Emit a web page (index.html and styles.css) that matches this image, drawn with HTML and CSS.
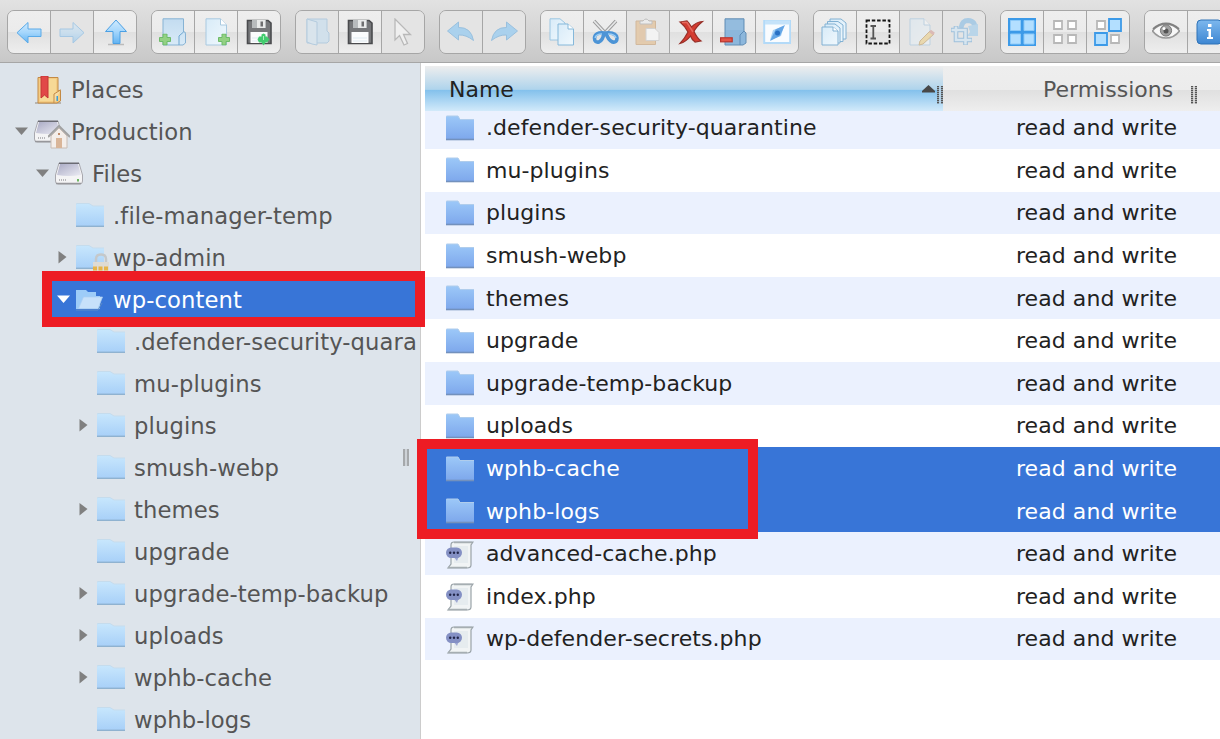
FILE: index.html
```html
<!DOCTYPE html>
<html lang="en">
<head>
<meta charset="UTF-8">
<title>File Manager</title>
<link rel="stylesheet" href="styles.css">
</head>
<body>

<!-- shared icons -->
<svg class="defs" width="0" height="0">
	<defs>
		<linearGradient id="gBlue" x1="0" y1="0" x2="0" y2="1"><stop offset="0" stop-color="#d0eafd"/><stop offset=".5" stop-color="#a4d6fc"/><stop offset="1" stop-color="#62b3f2"/></linearGradient>
		<linearGradient id="gTree" x1="0" y1="0" x2="0" y2="1"><stop offset="0" stop-color="#c8e7fd"/><stop offset="1" stop-color="#a8d0f8"/></linearGradient>
		<linearGradient id="gDir" x1="0" y1="0" x2="0" y2="1"><stop offset="0" stop-color="#9cc8f8"/><stop offset="1" stop-color="#7ea8ec"/></linearGradient>
		<linearGradient id="gPaper" x1="0" y1="0" x2="1" y2="1"><stop offset="0" stop-color="#d8ebf8"/><stop offset="1" stop-color="#f0f8fd"/></linearGradient>
		<linearGradient id="gFolder" x1="0" y1="0" x2="0" y2="1"><stop offset="0" stop-color="#c3dcf0"/><stop offset="1" stop-color="#d8eaf7"/></linearGradient>
		<linearGradient id="gDisk" x1="0" y1="0" x2="1" y2="1"><stop offset="0" stop-color="#a9aac4"/><stop offset="1" stop-color="#ececf4"/></linearGradient>
		<linearGradient id="gInfo" x1="0" y1="0" x2="0" y2="1"><stop offset="0" stop-color="#7db8ee"/><stop offset="1" stop-color="#3d86d2"/></linearGradient>
	</defs>
	<symbol id="i-dir-tree" viewBox="0 0 28 28">
		<path d="M0 2.500Q0 1.500 1 1.500H13L17 4H28V24H0z" fill="url(#gTree)"/>
		<path d="M0 2.500Q0 1.500 1 1.500H13L17 4H28" fill="none" stroke="#c5dced"/>
		<path d="M0 24.300H28" stroke="#8fb2d0" stroke-width="1.400"/>
	</symbol>
	<symbol id="i-dir" viewBox="0 0 28 28">
		<path d="M0 2Q0 1 1 1H12L14 4H28V24H0z" fill="url(#gDir)"/>
		<path d="M0 2Q0 1 1 1H12L14 4.500H28" fill="none" stroke="#b0cdec"/>
		<path class="dir-base" d="M0 24.500H28" stroke="#7391bd" stroke-width="1.600"/>
	</symbol>
	<symbol id="i-dir-open" viewBox="0 0 28 28">
		<path d="M0 4H10L12 6H20V10H24V23H0z" fill="#9dccf8"/>
		<path d="M2.500 22.500L7.500 11H26.500L22 22.500z" fill="#c7e1fa" stroke="#acd0f3" stroke-width=".7"/>
		<path d="M0 24H22L26 17" fill="none" stroke="#5e8cc5"/>
	</symbol>
	<symbol id="i-php" viewBox="0 0 28 28">
		<path d="M8 1H27L25 4V24Q25 27 21 27H2L5 23V4Q5 1 8 1z" fill="#f1f4f5" stroke="#9aa3a8" stroke-width="1.200"/>
		<path d="M2 26.500H21M8 1.500H26" stroke="#a6aeb2" stroke-width="1.500"/>
		<path d="M8 5H22V22H8z" fill="#e6ecef"/>
		<path d="M7 15H13L11 20z" fill="#9ea8d2"/>
		<rect x="0" y="6.500" width="16" height="10.500" rx="5.200" fill="#8490c4"/>
		<g fill="#22264a"><circle cx="4.200" cy="11.800" r="1.200"/><circle cx="8" cy="11.800" r="1.200"/><circle cx="11.800" cy="11.800" r="1.200"/></g>
	</symbol>
	<symbol id="i-disk" viewBox="0 0 28 28">
		<path d="M4 3H24L27.500 15V21Q27.500 24 25 24H3Q.5 24 .5 21V15z" fill="#f4f4f5" stroke="#a8a8ae"/>
		<path d="M5 4H23L26 15Q14 17 2 15z" fill="url(#gDisk)"/>
		<path d="M4 3.300H24" stroke="#5f6068" stroke-width="1.200"/>
		<path d="M1 23.500H26" stroke="#97979b" stroke-width="1.500"/>
		<path d="M4 20H12" stroke="#b7b7ba" stroke-width="2" stroke-dasharray="1 1"/>
		<path d="M23 19V21.500" stroke="#6eb663" stroke-width="2"/>
	</symbol>
	<symbol id="i-arrow-down" viewBox="0 0 14 14"><path d="M0 2.500H13L6.500 10z"/></symbol>
	<symbol id="i-arrow-right" viewBox="0 0 14 14"><path d="M1.500 0L9.500 6L1.500 12.500z"/></symbol>
	<symbol id="i-floppy" viewBox="0 0 28 28">
		<path d="M2.500 2.500H23L26 5V25.500H2.500z" fill="#76777a" stroke="#4a4b4e" stroke-width="1.600"/>
		<path d="M7 2H21V10H7z" fill="#b8bbbd"/>
		<path d="M12 2H20V10H12z" fill="#e9eaea"/>
		<path d="M15.500 3.500H18V8.500H15.500z" fill="#6e6e70"/>
		<path d="M5.500 14H22.500V25H5.500z" fill="#fbfcfd"/>
		<path d="M7 20H21M7 23H21" stroke="#dfeaf1"/>
	</symbol>
	<symbol id="i-plus" viewBox="0 0 12 12"><path d="M4 .5H8V4H11.500V8H8V11.500H4V8H.5V4H4z" fill="#93d183" stroke="#6dbb69"/></symbol>
</svg>

<div class="toolbar">
	<div class="group">
		<div class="btn"><svg viewBox="0 0 28 28"><path d="M2 14.700L13 4.500V11H26V18.500H13V25z" fill="url(#gBlue)" stroke="#5aaae8"/></svg></div>
		<div class="btn off"><svg viewBox="0 0 28 28"><path d="M26 14.700L15 4.500V11H2V18.500H15V25z" fill="url(#gBlue)" stroke="#4ba0e4"/></svg></div>
		<div class="btn"><svg viewBox="0 0 28 28"><path d="M7 26.500H23" stroke="#bbb" stroke-width="1.500"/><path d="M15 2L25.500 13.500H19V25.500H12V13.500H4.500z" fill="url(#gBlue)" stroke="#4ba0e4"/></svg></div>
	</div>
	<div class="group">
		<div class="btn"><svg viewBox="0 0 28 28"><path d="M4 .8H24.500V14Q26.500 13 26.500 16V25L24 27H4z" fill="url(#gFolder)" stroke="#87b3d4"/><path d="M24.500 14L20 18V27" fill="none" stroke="#6ca5d0"/><use href="#i-plus" x="0" y="15.500" width="12" height="12"/></svg></div>
		<div class="btn"><svg viewBox="0 0 28 28"><path d="M4 .8H18.500L24.500 7V27H4z" fill="url(#gPaper)" stroke="#a9c9e0"/><path d="M18.500 .8V7H24.500" fill="#fff" stroke="#a9c9e0"/><use href="#i-plus" x="16" y="15.500" width="12" height="12"/></svg></div>
		<div class="btn"><svg viewBox="0 0 28 28"><use href="#i-floppy"/><path d="M16.500 16.500L18.500 15.500L20.500 16.500V18.500H22L24.500 21.500L22 24.500H20.500L18.500 27.500L16.500 24.500H14L12.500 21.500L14 18.500H16.500z" fill="#42cb6e"/><path d="M18.500 18V22" stroke="#a9f0bf"/></svg></div>
	</div>
	<div class="group">
		<div class="btn off"><svg viewBox="0 0 28 28"><path d="M4 1H24V13L26 15V23L24 25H4z" fill="#b4d9f4" stroke="#6ba5d4"/><path d="M4 1L14 4V27L9 26L4 24z" fill="#c7e4f8" stroke="#6ba5d4"/></svg></div>
		<div class="btn"><svg viewBox="0 0 28 28"><use href="#i-floppy"/></svg></div>
		<div class="btn off"><svg viewBox="0 0 28 28"><path d="M6 1V22L10.500 17.500L15 27L18.500 25.500L14.500 16.500H21.500z" fill="#fff" stroke="#777" stroke-width="1.300"/></svg></div>
	</div>
	<div class="group">
		<div class="btn half"><svg viewBox="0 0 28 28"><path d="M.5 13L11.500 4V9.500Q24 9 26.500 22.500Q19 16.500 11.500 17V22z" fill="#8cc7f2" stroke="#72aedb"/></svg></div>
		<div class="btn half"><svg viewBox="0 0 28 28"><path d="M27.500 13L16.500 4V9.500Q4 9 1.500 22.500Q9 16.500 16.500 17V22z" fill="#8cc7f2" stroke="#72aedb"/></svg></div>
	</div>
	<div class="group">
		<div class="btn"><svg viewBox="0 0 28 28"><path d="M2 .8H12L17 5V22H2z" fill="url(#gPaper)" stroke="#9cc6e2"/><path d="M10 6H20L25.500 11V27H10z" fill="url(#gPaper)" stroke="#85b8da"/><path d="M20 6V11H25.500" fill="#fff" stroke="#85b8da"/></svg></div>
		<div class="btn"><svg viewBox="0 0 28 28"><path d="M3 3L17 18M25 3L11 18" stroke="#999" stroke-width="3.500"/><path d="M3 3L17 18M25 3L11 18" stroke="#e5e6e7" stroke-width="1.800"/><g fill="none" stroke="#4c94d6" stroke-width="3.600"><path d="M13 15Q4 14 3.500 20Q3.500 25 8 24Q12 22 13 15zM15 15Q25 14 26 20Q26 25 21.500 24Q17 22 15 15z"/></g><path d="M11 16Q5 16 4 20M17 16Q24 16 25 20" fill="none" stroke="#9bcdf4" stroke-width="1.500"/></svg></div>
		<div class="btn half"><svg viewBox="0 0 28 28"><path d="M2 3H21.500V26.500H2z" fill="#e2bd90" stroke="#c6a077"/><path d="M5 7H19V24H5z" fill="#dfbb91"/><path d="M6 6V3H9Q12 -1 15 3H18V6z" fill="#eee" stroke="#aaa"/><path d="M12 10.500H21L25 14.500V22.500H12z" fill="#fafafa" stroke="#c8c8c8"/></svg></div>
		<div class="btn"><svg viewBox="0 0 28 28"><path d="M3 4L10 3Q12 5 14.500 9Q19 4 25.500 3.500Q19 9 17 13.500Q20 20 24 23L18 24Q15 22 13.500 18Q9 24 3 25.500Q8 20 11 14Q8 8 3 4z" fill="#d43c31" stroke="#973029" stroke-width="1.200"/><path d="M5 4.500L10 4.500L16 14" fill="none" stroke="#e4695d" stroke-width="1.500"/></svg></div>
		<div class="btn"><svg viewBox="0 0 28 28"><path d="M5 .8H24V13L26 15V25L23 27H5z" fill="#8cb7dc" stroke="#658fb5"/><path d="M24 13L20 17V27" fill="none" stroke="#5c8cb8"/><path d="M6 2H23V12H6z" fill="#9bc1e0" opacity=".5"/><rect x=".6" y="19.800" width="11.600" height="4" fill="#e45447" stroke="#b8352d" stroke-width="1.200"/></svg></div>
		<div class="btn"><svg viewBox="0 0 28 28"><rect x="1.200" y="3" width="26" height="22" fill="#f9fcff" stroke="#b3daf8" stroke-width="2"/><path d="M2 4.500H27" stroke="#c5e3fa" stroke-width="4"/><path d="M7 22L10 12L21 8L18 18z" fill="#aad3f6"/><path d="M7 23L12.500 11.500L22 7L17 18z" fill="#64a6e6"/><circle cx="14.500" cy="15" r="2.500" fill="#2870c4"/></svg></div>
	</div>
	<div class="group">
		<div class="btn"><svg viewBox="0 0 28 28"><g fill="url(#gPaper)" stroke="#82b1d3"><path d="M9 1H20L25 5V21H9z"/><path d="M6.500 3.500H17L22 7V23.500H6.500z"/><path d="M4 6H14L19 10V25H4z"/><path d="M1 9H12L17 13V27H1z"/></g><path d="M12 9V13H17" fill="#fff" stroke="#82b1d3"/></svg></div>
		<div class="btn"><svg viewBox="0 0 28 28"><rect x="2.500" y="2.500" width="23" height="23" fill="none" stroke="#161616" stroke-width="1.800" stroke-dasharray="3.500 1.800"/><path d="M6.500 8H12M6.500 20.500H12M9.300 8V20.500" stroke="#555" stroke-width="1.800"/></svg></div>
		<div class="btn off"><svg viewBox="0 0 28 28"><path d="M3 .8H17L23 7V27H3z" fill="url(#gPaper)" stroke="#81b3da"/><path d="M17 .8V7H23" fill="#fff" stroke="#81b3da"/><path d="M13 23L23 13L27 16L16 26L12 27z" fill="#efc55d" stroke="#aa7926"/><path d="M23 13L27 16" stroke="#cc796e" stroke-width="3"/></svg></div>
		<div class="btn half"><svg viewBox="0 0 28 28"><path d="M11 10Q12 2.500 18 2.500Q26 3 24.500 11" fill="none" stroke="#8abde4" stroke-width="5"/><path d="M18 8L28 6V18H17L20 14z" fill="#a2cdec"/><path d="M1 12H15.500V27M6 8V22H22" fill="none" stroke="#79acd4" stroke-width="4.600"/><path d="M1.500 12H15.500V26.500M6 8.500V22H21.500" fill="none" stroke="#cfe5f5" stroke-width="2.600"/></svg></div>
	</div>
	<div class="group">
		<div class="btn"><svg viewBox="0 0 28 28"><path d="M0 0H28V28H0z" fill="#3c9ae8"/><g fill="#b3dfff" stroke="#8ccaf9"><path d="M2.500 2.500H12.500V12.500H2.500zM16 2.500H26V12.500H16zM2.500 16H12.500V26H2.500zM16 16H26V26H16z"/></g></svg></div>
		<div class="btn"><svg viewBox="0 0 28 28"><g fill="#fff" stroke="#b8b8b8" stroke-width="1.800"><path d="M3 3H11V11H3zM17 3H25V11H17zM3 17H11V25H3zM17 17H25V25H17z"/></g></svg></div>
		<div class="btn"><svg viewBox="0 0 28 28"><g fill="#fff" stroke="#b8b8b8" stroke-width="1.800"><path d="M3 3H11V11H3zM17 17H25V25H17z"/></g><g fill="#b3dfff" stroke="#3c9ae8" stroke-width="1.800"><path d="M15 1H27V13H15zM1 15H13V27H1z"/></g></svg></div>
	</div>
	<div class="group">
		<div class="btn"><svg viewBox="0 0 28 28"><path d="M.5 13Q6 6 14 6Q22 6 27.500 13Q22 20 14 20Q6 20 .5 13z" fill="#f7f7f7" stroke="#999" stroke-width="1.600"/><path d="M1 11Q7 5.500 14 5.500Q21 5.500 27 11" fill="none" stroke="#808080" stroke-width="1.800"/><circle cx="14" cy="12.500" r="5.600" fill="#a0a0a0" stroke="#777"/><circle cx="14" cy="13" r="2.500" fill="#555"/><circle cx="12" cy="10.500" r="1.500" fill="#fff"/></svg></div>
		<div class="btn"><svg viewBox="0 0 28 28"><rect x="2" y="2" width="25" height="24" rx="4" fill="url(#gInfo)" stroke="#2f73b7"/><path d="M12 11H16V19H18V21H12V19H13.500V13H12zM13 6H16.500V9H13z" fill="#fff"/></svg></div>
	</div>
</div>

<div class="workzone">
	<div class="tree">
		<div class="node lv0"><span class="arrow"></span><svg class="icon" viewBox="0 0 28 28"><path d="M1 27H27" stroke="#b7b5b1" stroke-width="2"/><path d="M4 1.500H24V15L26.500 14V25L23 27H4z" fill="#f4cc83" stroke="#c38a45"/><path d="M6 3H22V25H6z" fill="#f7d996"/><path d="M26.500 14L20 18V27" fill="#f6dda8" stroke="#c38a45"/><path d="M22.500 20H24V25H22.500z" fill="#3b9ed9"/><path d="M7 0H14V22L10.500 19L7 22z" fill="#e14848" stroke="#c33434"/></svg><span class="name">Places</span></div>
		<div class="node lv0"><svg class="arrow"><use href="#i-arrow-down"/></svg><span class="icon"><svg class="icon"><use href="#i-disk"/></svg><svg class="badge home" viewBox="0 0 22 24"><path d="M3 11L11 3L19 11V23H3z" fill="#f4eeea" stroke="#c9bcb4"/><path d="M8 13H14V23H8z" fill="#d9b598"/><path d="M10 9H12" stroke="#c08b69" stroke-width="2"/><path d="M0 12L11 1L22 12" fill="none" stroke="#a1a1a1" stroke-width="2"/></svg></span><span class="name">Production</span></div>
		<div class="node lv1"><svg class="arrow"><use href="#i-arrow-down"/></svg><svg class="icon"><use href="#i-disk"/></svg><span class="name">Files</span></div>
		<div class="node lv2"><span class="arrow"></span><svg class="icon"><use href="#i-dir-tree"/></svg><span class="name">.file-manager-temp</span></div>
		<div class="node lv2"><svg class="arrow"><use href="#i-arrow-right"/></svg><span class="icon"><svg class="icon"><use href="#i-dir-tree"/></svg><svg class="badge lock" viewBox="0 0 18 18"><path d="M4 10V6Q4 1.500 9 1.500Q14 1.500 14 6V10" fill="none" stroke="#c5c8ca" stroke-width="2.500"/><path d="M1 9H17V18H1z" fill="#dedbd4"/><path d="M1 15.500H17" stroke="#e5b44a" stroke-width="4" stroke-dasharray="4 1.500"/></svg></span><span class="name">wp-admin</span></div>
		<div class="node lv2 selected"><svg class="arrow"><use href="#i-arrow-down"/></svg><svg class="icon"><use href="#i-dir-open"/></svg><span class="name">wp-content</span></div>
		<div class="node lv3"><span class="arrow"></span><svg class="icon"><use href="#i-dir-tree"/></svg><span class="name">.defender-security-quara</span></div>
		<div class="node lv3"><span class="arrow"></span><svg class="icon"><use href="#i-dir-tree"/></svg><span class="name">mu-plugins</span></div>
		<div class="node lv3"><svg class="arrow"><use href="#i-arrow-right"/></svg><svg class="icon"><use href="#i-dir-tree"/></svg><span class="name">plugins</span></div>
		<div class="node lv3"><span class="arrow"></span><svg class="icon"><use href="#i-dir-tree"/></svg><span class="name">smush-webp</span></div>
		<div class="node lv3"><svg class="arrow"><use href="#i-arrow-right"/></svg><svg class="icon"><use href="#i-dir-tree"/></svg><span class="name">themes</span></div>
		<div class="node lv3"><span class="arrow"></span><svg class="icon"><use href="#i-dir-tree"/></svg><span class="name">upgrade</span></div>
		<div class="node lv3"><svg class="arrow"><use href="#i-arrow-right"/></svg><svg class="icon"><use href="#i-dir-tree"/></svg><span class="name">upgrade-temp-backup</span></div>
		<div class="node lv3"><svg class="arrow"><use href="#i-arrow-right"/></svg><svg class="icon"><use href="#i-dir-tree"/></svg><span class="name">uploads</span></div>
		<div class="node lv3"><svg class="arrow"><use href="#i-arrow-right"/></svg><svg class="icon"><use href="#i-dir-tree"/></svg><span class="name">wphb-cache</span></div>
		<div class="node lv3"><span class="arrow"></span><svg class="icon"><use href="#i-dir-tree"/></svg><span class="name">wphb-logs</span></div>
		<span class="resize"></span>
	</div>

	<div class="list">
		<div class="thead">
			<div class="th name-col sorted"><span>Name</span><svg class="sort" viewBox="0 0 13 8"><path d="M0 7.500V6L6.500 0L13 6V7.500z" fill="#484848"/></svg><span class="grip"></span></div>
			<div class="th perm-col"><span>Permissions</span><span class="grip"></span></div>
		</div>
		<div class="rows">
			<div class="row"><svg class="icon"><use href="#i-dir"/></svg><span class="file">.defender-security-quarantine</span><span class="perm">read and write</span></div>
			<div class="row"><svg class="icon"><use href="#i-dir"/></svg><span class="file">mu-plugins</span><span class="perm">read and write</span></div>
			<div class="row"><svg class="icon"><use href="#i-dir"/></svg><span class="file">plugins</span><span class="perm">read and write</span></div>
			<div class="row"><svg class="icon"><use href="#i-dir"/></svg><span class="file">smush-webp</span><span class="perm">read and write</span></div>
			<div class="row"><svg class="icon"><use href="#i-dir"/></svg><span class="file">themes</span><span class="perm">read and write</span></div>
			<div class="row"><svg class="icon"><use href="#i-dir"/></svg><span class="file">upgrade</span><span class="perm">read and write</span></div>
			<div class="row"><svg class="icon"><use href="#i-dir"/></svg><span class="file">upgrade-temp-backup</span><span class="perm">read and write</span></div>
			<div class="row"><svg class="icon"><use href="#i-dir"/></svg><span class="file">uploads</span><span class="perm">read and write</span></div>
			<div class="row selected"><svg class="icon"><use href="#i-dir"/></svg><span class="file">wphb-cache</span><span class="perm">read and write</span></div>
			<div class="row selected"><svg class="icon"><use href="#i-dir"/></svg><span class="file">wphb-logs</span><span class="perm">read and write</span></div>
			<div class="row"><svg class="icon"><use href="#i-php"/></svg><span class="file">advanced-cache.php</span><span class="perm">read and write</span></div>
			<div class="row"><svg class="icon"><use href="#i-php"/></svg><span class="file">index.php</span><span class="perm">read and write</span></div>
			<div class="row"><svg class="icon"><use href="#i-php"/></svg><span class="file">wp-defender-secrets.php</span><span class="perm">read and write</span></div>
		</div>
	</div>
</div>

<!-- red highlight frames over the page -->
<div class="mark mark-tree"></div>
<div class="mark mark-list"></div>

</body>
</html>
```
FILE: styles.css
```css
* {
	box-sizing: border-box;
}

body {
	margin: 0;
	width: 1220px;
	height: 739px;
	overflow: hidden;
	background: #fff;
	font-family: Verdana, "DejaVu Sans", sans-serif;
	font-size: 22px;
	color: #222;
	position: relative;
}

.defs {
	position: absolute;
}

/* toolbar */
.toolbar {
	display: flex;
	gap: 14px;
	height: 63px;
	padding: 10px 0 0 7px;
	background: linear-gradient(#e2e2e2, #c8c8c8);
	border-bottom: 1px solid #a6a6a6;
}

.group {
	display: flex;
	flex: none;
	height: 44px;
	border: 1px solid #a6a6a6;
	border-radius: 7px;
	overflow: hidden;
}

.btn {
	width: 42px;
	box-sizing: content-box;
	display: flex;
	align-items: center;
	justify-content: center;
	background: linear-gradient(#eeeeee, #ebebeb 50%, #e0e0e0 51%, #eeeeee);
}

.btn + .btn {
	border-left: 1px solid #a6a6a6;
}

.btn svg {
	width: 28px;
	height: 28px;
}

.btn.off, .btn.half {
	background: #e4e4e4;
}

.btn.off svg {
	opacity: .4;
}

.btn.half svg {
	opacity: .65;
}

.icon {
	width: 28px;
	height: 28px;
	flex: none;
	display: block;
}

.workzone {
	display: flex;
	height: 676px;
}

/* folder tree */
.tree {
	position: relative;
	width: 421px;
	padding-top: 6px;
	background: #dde4eb;
	border-right: 1px solid #ccc;
	overflow: hidden;
	color: #555;
	font-size: 22.7px;
	letter-spacing: .1px;
}

.node {
	display: flex;
	align-items: center;
	height: 42px;
	white-space: nowrap;
}

.lv0 { padding-left: 15px; }
.lv1 { padding-left: 36px; }
.lv2 { padding-left: 57px; }
.lv3 { padding-left: 78px; }

.node .arrow {
	width: 14px;
	height: 14px;
	margin-right: 5px;
	flex: none;
	fill: #808080;
}

.node .name {
	margin-left: 9px;
}

.node span.icon {
	position: relative;
}

.badge {
	position: absolute;
}

.badge.home {
	left: 14px;
	top: 7px;
	width: 22px;
	height: 24px;
}

.badge.lock {
	left: 16px;
	top: 9px;
	width: 18px;
	height: 18px;
}

.node.selected {
	background: #3875d7;
	color: #fff;
	margin-left: 43px;
	margin-right: 4px;
	padding-left: 14px;
}

.node.selected .arrow {
	fill: #fff;
}

.resize {
	position: absolute;
	left: 403px;
	top: 386px;
	width: 6px;
	height: 17px;
	border: solid #a5a8ab;
	border-width: 0 2px;
	background: #cdd2d7;
}

/* file list */
.list {
	flex: 1;
	padding: 3px 0 0 4px;
	overflow: hidden;
}

.thead {
	display: flex;
	height: 45px;
	position: relative;
}

.th {
	display: flex;
	align-items: center;
	padding-top: 2px;
	color: #555;
	background: linear-gradient(#eeeeee, #ececec 53%, #e0e0e0 54%, #eeeeee);
}

.name-col {
	width: 518px;
	padding-left: 24px;
}

.th.sorted {
	color: #222;
	background: linear-gradient(#eeeeee, #afd4ec 52%, #84c1ec 54%, #d2eafa);
}

.perm-col {
	flex: 1;
	padding-left: 100px;
}

.sort {
	width: 13px;
	height: 8px;
	margin: -1px 0 0 auto;
}

.grip {
	width: 6px;
	height: 18px;
	margin: 10px 0 0 2px;
	background: repeating-linear-gradient(transparent 0 1px, rgba(230, 230, 230, .6) 1px 2px), linear-gradient(90deg, #555 2px, #ccc 2px 4px, #555 4px);
}

.name-col .grip {
	background: repeating-linear-gradient(transparent 0 1px, rgba(180, 215, 240, .6) 1px 2px), linear-gradient(90deg, #555 2px, #b5d0e3 2px 4px, #555 4px);
}

.perm-col .grip {
	margin-left: 18px;
}

.rows {
	height: 628px;
	overflow: hidden;
	display: flex;
	flex-direction: column;
	justify-content: flex-start;
}

.row {
	display: flex;
	align-items: center;
	flex: none;
	height: 42.6px;
	padding-left: 21px;
}

.row .icon {
	margin-top: 2px;
}

/* first row is scrolled a little under the header */
.row:first-child {
	margin-top: -4.5px;
}

.row:nth-child(odd) {
	background: #ebf1fe;
}

.row.selected {
	background: #3875d7;
	color: #fff;
}

.file {
	width: 530px;
	margin-left: 12px;
	letter-spacing: .08px;
	white-space: nowrap;
}

.perm {
	letter-spacing: .06px;
	white-space: nowrap;
}

/* highlight frames */
.mark {
	position: absolute;
	border: 10px solid #ed1c24;
}

.mark-tree {
	left: 42px;
	top: 271px;
	width: 383px;
	height: 56px;
}

.mark-list {
	left: 417px;
	top: 439px;
	width: 341px;
	height: 100px;
}
```
